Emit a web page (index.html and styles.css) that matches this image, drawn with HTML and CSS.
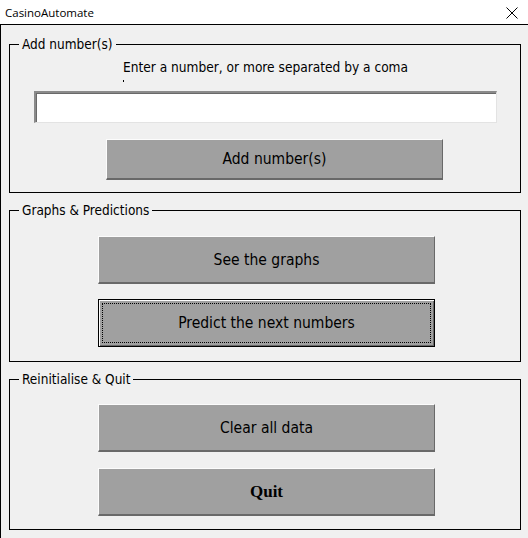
FILE: index.html
```html
<!DOCTYPE html>
<html>
<head>
<meta charset="utf-8">
<link rel="stylesheet" href="styles.css">
</head>
<body>
<div class="window">
  <div class="titlebar">
    <span class="title">CasinoAutomate</span>
    <svg class="close" width="12" height="12" viewBox="0 0 12 12"><path d="M0.5 0.5L11.5 11.5M11.5 0.5L0.5 11.5" stroke="#000" stroke-width="1" fill="none"/></svg>
  </div>
  <div class="client">
    <div class="frame frame-add">
      <span class="legend">Add number(s)</span>
      <div class="hint">Enter a number, or more separated by a coma</div>
      <div class="hint-dot"></div>
      <div class="input"></div>
      <div class="btn btn-add">Add number(s)</div>
    </div>
    <div class="frame frame-graphs">
      <span class="legend">Graphs &amp; Predictions</span>
      <div class="btn">See the graphs</div>
      <div class="btn btn-focus">Predict the next numbers</div>
    </div>
    <div class="frame frame-quit">
      <span class="legend">Reinitialise &amp; Quit</span>
      <div class="btn">Clear all data</div>
      <div class="btn btn-quit">Quit</div>
    </div>
  </div>
</div>
</body>
</html>
```
FILE: styles.css
```css
html, body {
  margin: 0;
  padding: 0;
  background: #f0f0f0;
}
.window {
  width: 528px;
  height: 538px;
  display: flex;
  flex-direction: column;
  font-family: "DejaVu Sans Condensed", "DejaVu Sans", sans-serif;
  color: #000;
}
.titlebar {
  height: 24px;
  background: #fff;
  display: flex;
  align-items: center;
  justify-content: space-between;
  padding: 0 10px 0 5px;
  flex: none;
}
.title {
  font-family: "Open Sans", "Noto Sans", sans-serif;
  font-size: 11.5px;
}
.close {
  display: block;
  margin-top: 1px;
}
.client {
  flex: 1;
  border-top: 1px solid #000;
  border-left: 1px solid #000;
  background: #f0f0f0;
  display: flex;
  flex-direction: column;
  padding: 19px 0 0 8px;
  gap: 17px;
}
.frame {
  position: relative;
  width: 510px;
  border: 1px solid #000;
  display: flex;
  flex-direction: column;
  align-items: flex-start;
  box-sizing: content-box;
}
.legend {
  position: absolute;
  top: -9px;
  left: 9px;
  padding: 0 3px;
  background: #f0f0f0;
  font-size: 13.5px;
  line-height: 16px;
}
.frame-add {
  height: 147px;
}
.frame-graphs {
  padding-left: 88px;
  width: 422px;
  padding-top: 25px;
  height: 125px;
  gap: 15px;
}
.frame-quit {
  padding-left: 88px;
  width: 422px;
  padding-top: 24px;
  height: 125px;
  gap: 16px;
}
.hint {
  margin: 14px 0 0 113px;
  font-size: 13.6px;
  line-height: 16px;
  height: 16px;
}
.hint-dot {
  margin: 5px 0 0 113px;
  width: 1px;
  height: 2px;
  background: #000;
}
.input {
  margin: 9px 0 0 24px;
  width: 460px;
  height: 29px;
  background: #fff;
  border-top: 2px solid #8a8a8a;
  border-left: 2px solid #8a8a8a;
  border-bottom: 1px solid #e3e3e3;
  border-right: 1px solid #e3e3e3;
  box-shadow: inset 1px 1px 0 #696969;
}
.btn {
  box-sizing: border-box;
  width: 337px;
  height: 48px;
  background: #a0a0a0;
  border-top: 1px solid #fcfcfc;
  border-left: 1px solid #fcfcfc;
  border-bottom: 2px solid #696969;
  border-right: 1px solid #696969;
  display: flex;
  align-items: center;
  justify-content: center;
  font-size: 15.5px;
}
.btn-add {
  margin: 16px 0 0 96px;
  height: 41px;
}
.btn-focus {
  border: 1px solid #000;
  box-shadow: inset 1px 1px 0 #fcfcfc, inset -1px -1px 0 #696969;
  outline: 1px dotted #000;
  outline-offset: -5px;
}
.btn-quit {
  font-family: "Liberation Serif", serif;
  font-weight: bold;
  font-size: 17px;
}
```
